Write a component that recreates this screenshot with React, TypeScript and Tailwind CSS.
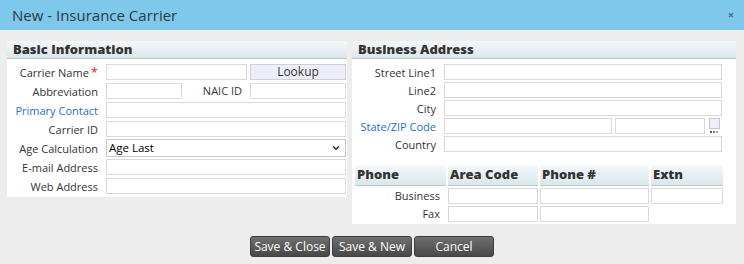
import { ChevronDown } from 'lucide-react';

const fieldCls = 'h-[16px] border border-[#d9d9d9] bg-white';

function Label({ text, link, required }: { text: string; link?: boolean; required?: boolean }) {
  return (
    <div
      className={`flex h-[16px] items-center justify-end whitespace-nowrap text-[11px] leading-none ${
        link ? 'text-[#1f6fc5]' : 'text-[#333]'
      }`}
    >
      {text}
      {required && <span className="ml-[2px] text-[13px] text-[#e2231a]">*</span>}
    </div>
  );
}

function SectionHeader({ title }: { title: string }) {
  return (
    <div className="flex h-[18px] items-center border-b border-[#b9c9d1] bg-gradient-to-b from-[#f4f8fa] to-[#dbe7ec] pl-[6px] text-[13px] font-extrabold text-[#333]">
      {title}
    </div>
  );
}

function BasicInformation() {
  return (
    <div className="h-[156px] w-[340px] bg-white">
      <SectionHeader title="Basic Information" />
      <div className="grid grid-cols-[91px_1fr] gap-x-[8px] gap-y-[3px] pt-[5px] pr-[1px]">
        <Label text="Carrier Name" required />
        <div className="flex gap-[3px]">
          <div className={`${fieldCls} flex-1`} />
          <div className="flex h-[16px] w-[96px] items-center justify-center border border-[#cfcfdc] bg-[#eeeefa] text-[12px] text-[#333]">
            Lookup
          </div>
        </div>

        <Label text="Abbreviation" />
        <div className="flex">
          <div className={`${fieldCls} w-[76px]`} />
          <div className="flex h-[16px] flex-1 items-center justify-end pr-[8px] text-[11px] text-[#333]">
            NAIC ID
          </div>
          <div className={`${fieldCls} w-[96px]`} />
        </div>

        <Label text="Primary Contact" link />
        <div className={fieldCls} />

        <Label text="Carrier ID" />
        <div className={fieldCls} />

        <Label text="Age Calculation" />
        <div className="flex h-[18px] -my-[1px] items-center justify-between border border-[#c8c8c8] bg-white pl-[2px] pr-[4px] text-[11.5px] text-black">
          <span>Age Last</span>
          <ChevronDown className="h-[10px] w-[10px] text-[#333]" strokeWidth={3.5} />
        </div>

        <Label text="E-mail Address" />
        <div className={fieldCls} />

        <Label text="Web Address" />
        <div className={fieldCls} />
      </div>
    </div>
  );
}

function ZipPicker() {
  return (
    <div className="ml-[3px] flex w-[12px] flex-col items-center">
      <div className="h-[11px] w-[11px] border border-[#c4c4d2] bg-[#efeffb]" />
      <div className="mt-[2px] flex gap-[1px]">
        <span className="h-[2px] w-[2px] bg-[#c0392b]" />
        <span className="h-[2px] w-[2px] bg-[#3a8fc4]" />
        <span className="h-[2px] w-[2px] bg-[#d4a02a]" />
      </div>
    </div>
  );
}

function PhoneHead({ title }: { title: string }) {
  return (
    <div className="flex h-[21px] items-center rounded-t-[3px] border-b border-[#b9c9d1] bg-gradient-to-b from-[#f4f8fa] to-[#dbe7ec] pl-[2px] text-[13px] font-extrabold text-[#333]">
      {title}
    </div>
  );
}

function BusinessAddress() {
  return (
    <div className="h-[183px] w-[384px] bg-white">
      <SectionHeader title="Business Address" />
      <div className="grid grid-cols-[84px_1fr] gap-x-[8px] gap-y-[2px] pt-[5px] pr-[14px]">
        <Label text="Street Line1" />
        <div className={fieldCls} />
        <Label text="Line2" />
        <div className={fieldCls} />
        <Label text="City" />
        <div className={fieldCls} />
        <Label text="State/ZIP Code" link />
        <div className="flex">
          <div className={`${fieldCls} w-[168px]`} />
          <div className={`${fieldCls} ml-[3px] w-[90px]`} />
          <ZipPicker />
        </div>
        <Label text="Country" />
        <div className={fieldCls} />
      </div>

      <div className="mt-[13px] grid grid-cols-[91px_90px_109px_72px] gap-x-[2px] gap-y-[2px] pl-[3px]">
        <PhoneHead title="Phone" />
        <PhoneHead title="Area Code" />
        <PhoneHead title="Phone #" />
        <PhoneHead title="Extn" />

        <div className="flex h-[16px] items-center justify-end pr-[6px] text-[11px] text-[#333]">Business</div>
        <div className={fieldCls} />
        <div className={fieldCls} />
        <div className={fieldCls} />

        <div className="flex h-[16px] items-center justify-end pr-[6px] text-[11px] text-[#333]">Fax</div>
        <div className={fieldCls} />
        <div className={fieldCls} />
        <div />
      </div>
    </div>
  );
}

function ActionButton({ label }: { label: string }) {
  return (
    <button
      type="button"
      className="h-[21px] w-[80px] rounded-[3px] border border-[#3e3e3e] bg-gradient-to-b from-[#707070] to-[#484848] text-[12px] leading-none text-white"
    >
      {label}
    </button>
  );
}

export default function App() {
  return (
    <div
      className="h-[264px] w-[744px] overflow-hidden bg-[#ededed]"
      style={{ fontFamily: '"Open Sans", "Noto Sans", sans-serif' }}
    >
      <div className="flex h-[30px] items-center justify-between bg-[#7ec8ec] pl-[12px] pr-[10px]">
        <span className="text-[15px] text-[#2f3a40]">New - Insurance Carrier</span>
        <span className="text-[11px] font-bold text-[#50687a]">×</span>
      </div>

      <div className="flex items-start gap-[5px] px-[7px] pt-[11px]">
        <BasicInformation />
        <BusinessAddress />
      </div>

      <div className="mt-[12px] flex justify-center gap-[2px]">
        <ActionButton label="Save & Close" />
        <ActionButton label="Save & New" />
        <ActionButton label="Cancel" />
      </div>
    </div>
  );
}
